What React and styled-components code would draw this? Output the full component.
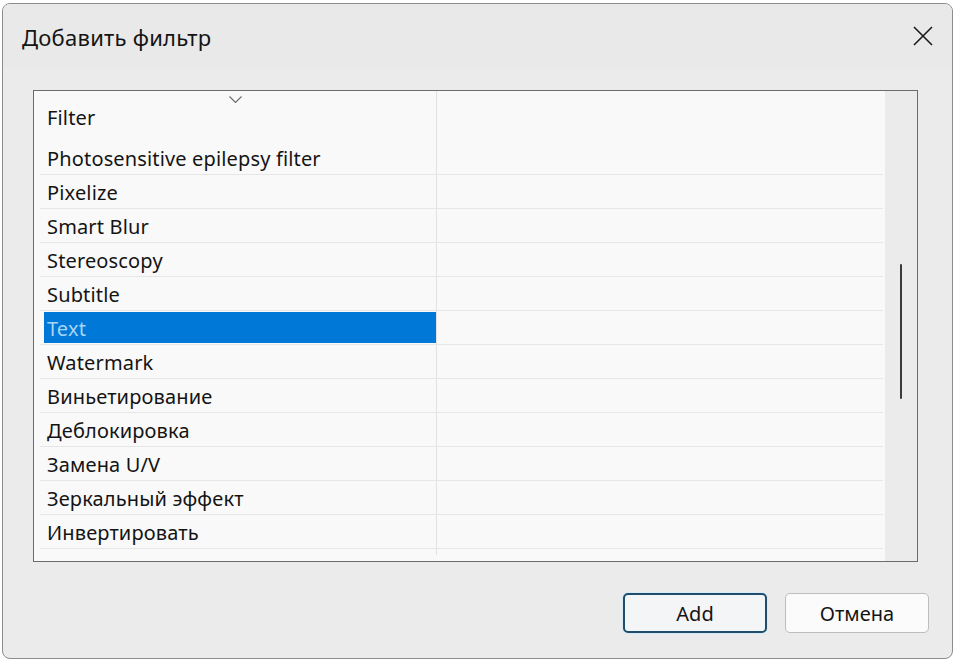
import React from "react";
import styled, { createGlobalStyle } from "styled-components";

const filters = [
  "Photosensitive epilepsy filter",
  "Pixelize",
  "Smart Blur",
  "Stereoscopy",
  "Subtitle",
  "Text",
  "Watermark",
  "Виньетирование",
  "Деблокировка",
  "Замена U/V",
  "Зеркальный эффект",
  "Инвертировать",
];

function App() {
  return (
    <>
      <GlobalStyle />
      <Dialog>
        <TitleBar>
          <Title>Добавить фильтр</Title>
          <CloseButton aria-label="close">
            <svg width="20" height="20" viewBox="0 0 20 20">
              <path d="M1 1 L19 19 M19 1 L1 19" stroke="#1b1b1b" strokeWidth="1.6" fill="none" />
            </svg>
          </CloseButton>
        </TitleBar>
        <Body>
          <ListBox>
            <ListMain>
              <Header>
                <HeaderCell>
                  <Chevron>
                    <svg width="13" height="7" viewBox="0 0 13 7">
                      <path d="M0.5 0.5 L6.5 6.5 L12.5 0.5" stroke="#6a6a6a" strokeWidth="1.1" fill="none" />
                    </svg>
                  </Chevron>
                  Filter
                </HeaderCell>
                <EmptyCell />
              </Header>
              {filters.map((name) => (
                <Row key={name}>
                  <NameCell>
                    <NameLabel $selected={name === "Text"}>{name}</NameLabel>
                  </NameCell>
                  <EmptyCell />
                </Row>
              ))}
              <Filler>
                <div />
                <EmptyCell />
              </Filler>
            </ListMain>
            <ScrollTrack>
              <ScrollThumb />
            </ScrollTrack>
          </ListBox>
          <Buttons>
            <Button $primary>Add</Button>
            <Button>Отмена</Button>
          </Buttons>
        </Body>
      </Dialog>
    </>
  );
}

const GlobalStyle = createGlobalStyle`
  body {
    margin: 0;
    background: #ffffff;
    font-family: "Noto Sans", "Open Sans", sans-serif;
    color: #141414;
  }
`;

const Dialog = styled.div`
  box-sizing: border-box;
  margin: 3px 0 0 2px;
  width: 951px;
  height: 656px;
  border: 1px solid #8c8c8c;
  border-radius: 8px;
  background: #ebebeb;
  display: flex;
  flex-direction: column;
  overflow: hidden;
`;

const TitleBar = styled.div`
  height: 64px;
  display: flex;
  align-items: center;
  justify-content: space-between;
  padding: 0 19px 0 19px;
  background: #e9e9e9;
`;

const Title = styled.div`
  font-size: 22px;
  letter-spacing: 0.25px;
  padding-top: 1px;
`;

const CloseButton = styled.div`
  width: 20px;
  height: 20px;
  display: flex;
`;

const Body = styled.div`
  flex: 1;
  display: flex;
  flex-direction: column;
  padding: 22px 34px 0 30px;
`;

const ListBox = styled.div`
  box-sizing: border-box;
  height: 472px;
  border: 1px solid #6c6c6c;
  background: #f9f9f9;
  display: flex;
`;

const ListMain = styled.div`
  flex: 1;
  display: flex;
  flex-direction: column;
  padding-right: 2px;
`;

const Header = styled.div`
  height: 50px;
  display: grid;
  grid-template-columns: 402px 1fr;
`;

const HeaderCell = styled.div`
  position: relative;
  padding: 13px 0 0 13px;
  font-size: 20px;
  letter-spacing: 0.15px;
`;

const Chevron = styled.span`
  position: absolute;
  left: 195px;
  top: 5px;
  display: flex;
`;

const EmptyCell = styled.div`
  border-left: 1px solid #e2e2e2;
`;

const Row = styled.div`
  box-sizing: border-box;
  height: 34px;
  margin-left: 6px;
  border-bottom: 1px solid #e6e6e6;
  display: grid;
  grid-template-columns: 396px 1fr;
`;

const NameCell = styled.div`
  display: flex;
  padding: 1px 0 1px 4px;
`;

const NameLabel = styled.div`
  flex: 1;
  display: flex;
  align-items: center;
  padding: 2px 0 0 3px;
  font-size: 20px;
  letter-spacing: 0.15px;
  background: ${(p) => (p.$selected ? "#0078d7" : "transparent")};
  color: ${(p) => (p.$selected ? "#a9d5f4" : "#141414")};
`;

const Filler = styled.div`
  height: 6px;
  margin-left: 6px;
  display: grid;
  grid-template-columns: 396px 1fr;
`;

const ScrollTrack = styled.div`
  width: 32px;
  background: #ebebeb;
  display: flex;
  justify-content: center;
  padding-top: 173px;
`;

const ScrollThumb = styled.div`
  width: 2px;
  height: 135px;
  border-radius: 1px;
  background: #3a3a3a;
`;

const Buttons = styled.div`
  display: flex;
  justify-content: flex-end;
  gap: 18px;
  margin-top: 31px;
  margin-right: -11px;
`;

const Button = styled.div`
  box-sizing: border-box;
  width: 144px;
  height: 40px;
  display: flex;
  align-items: center;
  justify-content: center;
  border-radius: 5px;
  font-size: 20px;
  background: ${(p) => (p.$primary ? "#f4f5f6" : "#fbfbfb")};
  border: ${(p) => (p.$primary ? "2px solid #1f4d6b" : "1px solid #bdbdbd")};
  box-shadow: ${(p) => (p.$primary ? "0 0 0 1px #d5eaf5" : "none")};
`;

export default App;
